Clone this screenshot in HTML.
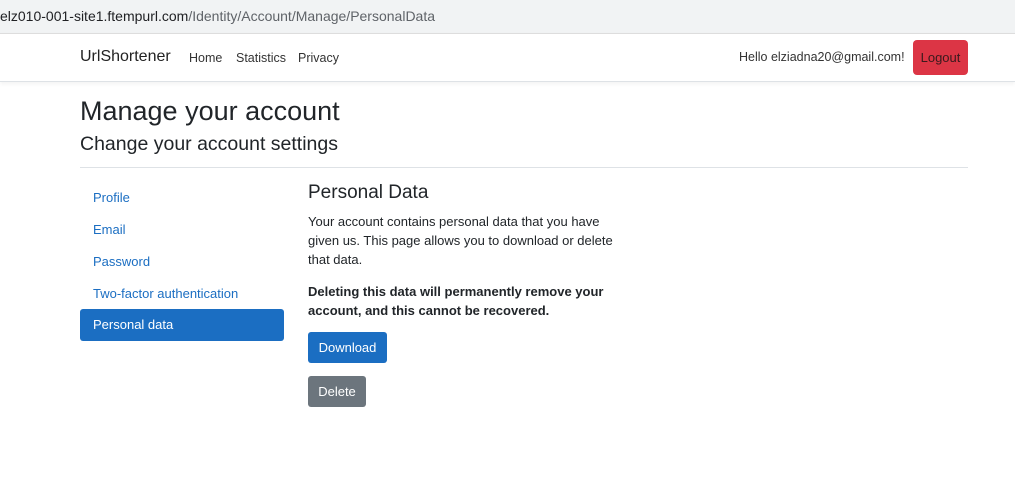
<!DOCTYPE html>
<html><head><style>
*{box-sizing:border-box;margin:0;padding:0}
body{width:1015px;height:490px;overflow:hidden;background:#fff;font-family:"Liberation Sans",sans-serif;color:#212529;position:relative}
.url{position:absolute;left:0;top:0;width:1015px;height:33px;background:#f1f3f4;font-size:14px;line-height:32px;color:#202124;white-space:nowrap}
.url span{color:#5f6368}
.nav{position:absolute;top:33px;left:0;width:1015px;height:49px;border-top:1px solid #ddd;border-bottom:1px solid #dee2e6;box-shadow:0 2px 4px rgba(0,0,0,.05)}
.abs{position:absolute;white-space:nowrap}
a{color:#1b6ec2;text-decoration:none}
.side{position:absolute;left:80px;width:204px;height:32px;font-size:13px;line-height:32px;padding-left:13px;color:#1b6ec2}
.btn{position:absolute;color:#fff;font-size:13px;border-radius:3px;text-align:center}
p{font-size:13px;line-height:19px}
</style></head><body>
<div class="url">elz010-001-site1.ftempurl.com<span>/Identity/Account/Manage/PersonalData</span></div>
<div class="nav">
<div class="abs" style="left:80px;top:14px;font-size:16px;color:#222">UrlShortener</div>
<div class="abs" style="left:189px;top:17px;font-size:12.5px;color:#333">Home</div>
<div class="abs" style="left:236px;top:17px;font-size:12.5px;color:#333">Statistics</div>
<div class="abs" style="left:298px;top:17px;font-size:12.5px;color:#333">Privacy</div>
<div class="abs" style="left:739px;top:16px;font-size:12.5px;color:#333">Hello elziadna20@gmail.com!</div>
<div class="abs" style="left:913px;top:6px;width:55px;height:35px;background:#dc3545;border-radius:4px;color:#3a1a1d;font-size:13px;line-height:35px;text-align:center">Logout</div>
</div>
<div class="abs" style="left:80px;top:96px;font-size:27px">Manage your account</div>
<div class="abs" style="left:80px;top:133px;font-size:19.5px">Change your account settings</div>
<div class="abs" style="left:80px;top:167px;width:888px;border-top:1px solid #dee2e6"></div>
<div class="side" style="top:182px">Profile</div>
<div class="side" style="top:214px">Email</div>
<div class="side" style="top:246px">Password</div>
<div class="side" style="top:278px">Two-factor authentication</div>
<div class="side" style="top:309px;background:#1b6ec2;color:#fff;border-radius:3px">Personal data</div>
<div class="abs" style="left:308px;top:182px;font-size:19px">Personal Data</div>
<div class="abs" style="left:308px;top:212px;width:310px;white-space:normal"><p>Your account contains personal data that you have given us. This page allows you to download or delete that data.</p>
<p style="margin-top:13px;font-weight:bold">Deleting this data will permanently remove your account, and this cannot be recovered.</p></div>
<div class="btn" style="left:308px;top:332px;width:79px;height:31px;line-height:31px;background:#1b6ec2">Download</div>
<div class="btn" style="left:308px;top:376px;width:58px;height:31px;line-height:31px;background:#6c757d">Delete</div>
</body></html>
